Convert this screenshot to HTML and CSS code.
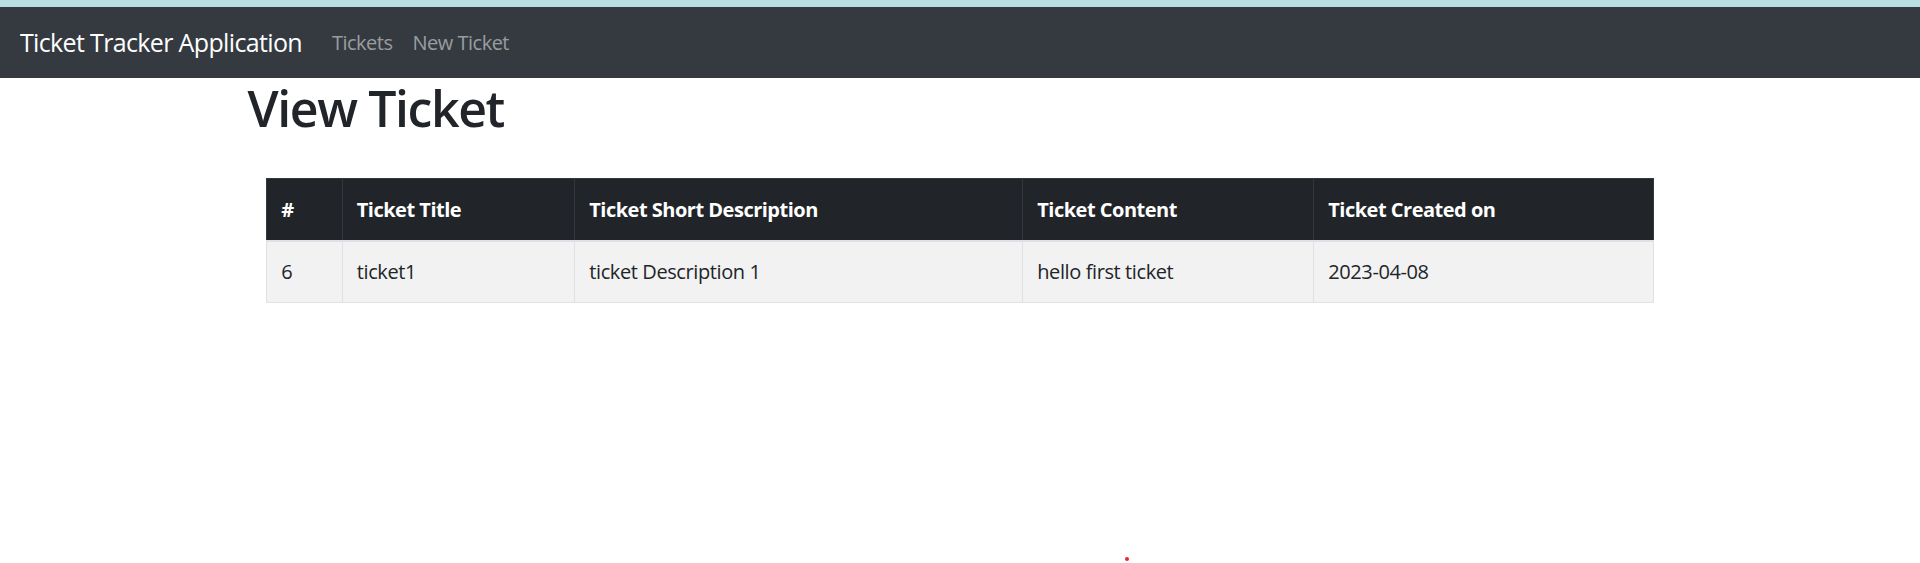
FILE: index.html
```html
<!DOCTYPE html>
<html lang="en">
<head>
<meta charset="utf-8">
<title>Ticket Tracker Application</title>
<link rel="stylesheet" href="styles.css">
</head>
<body>
<div class="topband"></div>
<nav class="navbar">
  <a class="brand" href="#">Ticket Tracker Application</a>
  <ul class="nav">
    <li><a class="nav-link" href="#">Tickets</a></li>
    <li><a class="nav-link" href="#">New Ticket</a></li>
  </ul>
</nav>
<div class="container">
  <div class="row">
    <h1 class="title">View Ticket</h1>
  </div>
  <table class="table">
    <colgroup>
      <col class="c-id">
      <col class="c-title">
      <col class="c-short">
      <col class="c-content">
      <col class="c-date">
    </colgroup>
    <thead>
      <tr>
        <th>#</th>
        <th>Ticket Title</th>
        <th>Ticket Short Description</th>
        <th>Ticket Content</th>
        <th>Ticket Created on</th>
      </tr>
    </thead>
    <tbody>
      <tr>
        <td>6</td>
        <td>ticket1</td>
        <td>ticket Description 1</td>
        <td>hello first ticket</td>
        <td>2023-04-08</td>
      </tr>
    </tbody>
  </table>
</div>
<span class="dot"></span>
</body>
</html>
```
FILE: styles.css
```css
* { box-sizing: border-box; }
html, body { margin: 0; padding: 0; }
body {
  font-family: "Open Sans", "Noto Sans", sans-serif;
  font-size: 20px;
  line-height: 1.5;
  color: #212529;
  background: #fff;
  position: relative;
  min-height: 563px;
  overflow: hidden;
}
.topband {
  height: 7px;
  background: #b6e0e4;
}
.navbar {
  display: flex;
  align-items: center;
  height: 71px;
  padding: 0 20px;
  background: #343a40;
}
.brand {
  font-size: 25px;
  line-height: 37px;
  color: #fff;
  text-decoration: none;
  margin-right: 20px;
  letter-spacing: -0.65px;
}
.nav {
  display: flex;
  list-style: none;
  margin: 0;
  padding: 0;
}
.nav-link {
  display: block;
  padding: 0 10px;
  color: rgba(255,255,255,.5);
  text-decoration: none;
  font-size: 20px;
  letter-spacing: -0.5px;
}
.container {
  width: 1425px;
  margin: 0 auto;
  padding: 0 18.75px;
}
.row {
  display: flex;
  margin: 0 -18.75px;
}
.title {
  margin: 0;
  font-size: 50px;
  font-weight: 600;
  line-height: 60px;
  letter-spacing: -1.4px;
  height: 60px;
}
.table {
  margin-top: 40px;
  width: 100%;
  border-collapse: collapse;
  table-layout: fixed;
}
.c-id { width: 75.5px; }
.c-title { width: 232.5px; }
.c-short { width: 448px; }
.c-content { width: 291px; }
.c-date { width: auto; }
.table th, .table td {
  text-align: left;
  padding: 15px 14px;
  white-space: nowrap;
  vertical-align: middle;
}
.table th {
  line-height: 31px;
  background: #212529;
  color: #fff;
  font-weight: 700;
  border: 1px solid #32383e;
  border-bottom: 2px solid #dee2e6;
  letter-spacing: -0.5px;
}
.table td {
  line-height: 30px;
  background: #f2f2f2;
  border: 1px solid #dee2e6;
  letter-spacing: -0.4px;
}
.dot {
  position: absolute;
  left: 1125px;
  top: 557px;
  width: 4px;
  height: 4px;
  border-radius: 50%;
  background: #e8262b;
}
```
